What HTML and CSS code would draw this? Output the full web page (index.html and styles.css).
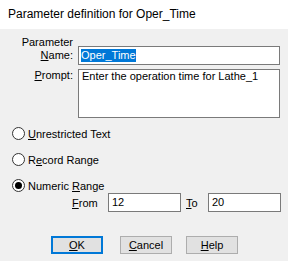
FILE: index.html
```html
<!DOCTYPE html>
<html lang="en">
<head>
    <meta charset="UTF-8">
    <title>Parameter definition for Oper_Time</title>
    <link rel="stylesheet" href="styles.css">
</head>
<body>
    <div class="titlebar">Parameter definition for Oper_Time</div>

    <div class="dialog">
        <div class="fields">
            <div class="lbl lbl-name">Parameter<br><u>N</u>ame:</div>
            <div class="box box-name"><span class="sel">Oper_Time</span></div>
            <div class="lbl lbl-prompt"><u>P</u>rompt:</div>
            <div class="box box-prompt">Enter the operation time for Lathe_1</div>
        </div>

        <div class="options">
            <div class="option"><span class="radio"></span><span><u>U</u>nrestricted Text</span></div>
            <div class="option"><span class="radio"></span><span>R<u>e</u>cord Range</span></div>
            <div class="option"><span class="radio checked"></span><span>Numeric <u>R</u>ange</span></div>
        </div>

        <div class="range">
            <span class="range-lbl from"><u>F</u>rom</span>
            <div class="box box-num">12</div>
            <span class="range-lbl to"><u>T</u>o</span>
            <div class="box box-num">20</div>
        </div>

        <div class="buttons">
            <div class="btn default"><u>O</u>K</div>
            <div class="btn btn-cancel"><u>C</u>ancel</div>
            <div class="btn btn-help"><u>H</u>elp</div>
        </div>
    </div>
</body>
</html>
```

FILE: styles.css
```css
body {
    margin: 0;
    width: 288px;
    height: 261px;
    overflow: hidden;
    background: #f0f0f0;
    font-family: "Liberation Sans", Arial, sans-serif;
    font-size: 11px;
    color: #000;
}
.titlebar {
    height: 29px;
    line-height: 29px;
    padding-left: 8px;
    background: #fff;
    font-size: 12px;
}
.dialog {
    padding-top: 7px;
}
.fields {
    display: grid;
    grid-template-columns: 73px 202px;
    column-gap: 5px;
    row-gap: 4px;
    align-items: start;
}
.lbl {
    text-align: right;
    line-height: 13px;
}
.box {
    background: #fff;
    border: 1px solid #7a7a7a;
    box-sizing: border-box;
    line-height: 13px;
    padding: 2px 2px 0;
    white-space: nowrap;
}
.box-name {
    height: 19px;
    margin-top: 10px;
}
.sel {
    background: #0078d7;
    color: #fff;
    display: inline-block;
    line-height: 13px;
}
.box-prompt {
    height: 49px;
    padding-top: 0;
    padding-left: 3px;
}
.options {
    margin-top: 9px;
    padding-left: 12px;
    display: flex;
    flex-direction: column;
    gap: 13px;
}
.option {
    display: flex;
    align-items: center;
    gap: 3px;
    height: 13px;
}
.radio {
    width: 11px;
    height: 11px;
    border: 1px solid #333;
    border-radius: 50%;
    background: #fff;
    display: flex;
    align-items: center;
    justify-content: center;
}
.radio.checked::after {
    content: "";
    width: 7px;
    height: 7px;
    border-radius: 50%;
    background: #000;
}
.range {
    margin-top: 1px;
    display: flex;
    align-items: center;
    padding-left: 72px;
}
.range-lbl.from {
    width: 36px;
}
.range-lbl.to {
    width: 27px;
    padding-left: 5px;
    box-sizing: border-box;
}
.box-num {
    width: 73px;
    height: 19px;
    padding-left: 3px;
}
.buttons {
    margin-top: 24px;
    display: flex;
    padding-left: 51px;
}
.btn {
    width: 52px;
    height: 18px;
    box-sizing: border-box;
    background: #e1e1e1;
    border: 1px solid #adadad;
    text-align: center;
    line-height: 16px;
}
.btn.default {
    border: 2px solid #0078d7;
    line-height: 14px;
}
.btn-cancel {
    margin-left: 17px;
}
.btn-help {
    margin-left: 14px;
}
```
